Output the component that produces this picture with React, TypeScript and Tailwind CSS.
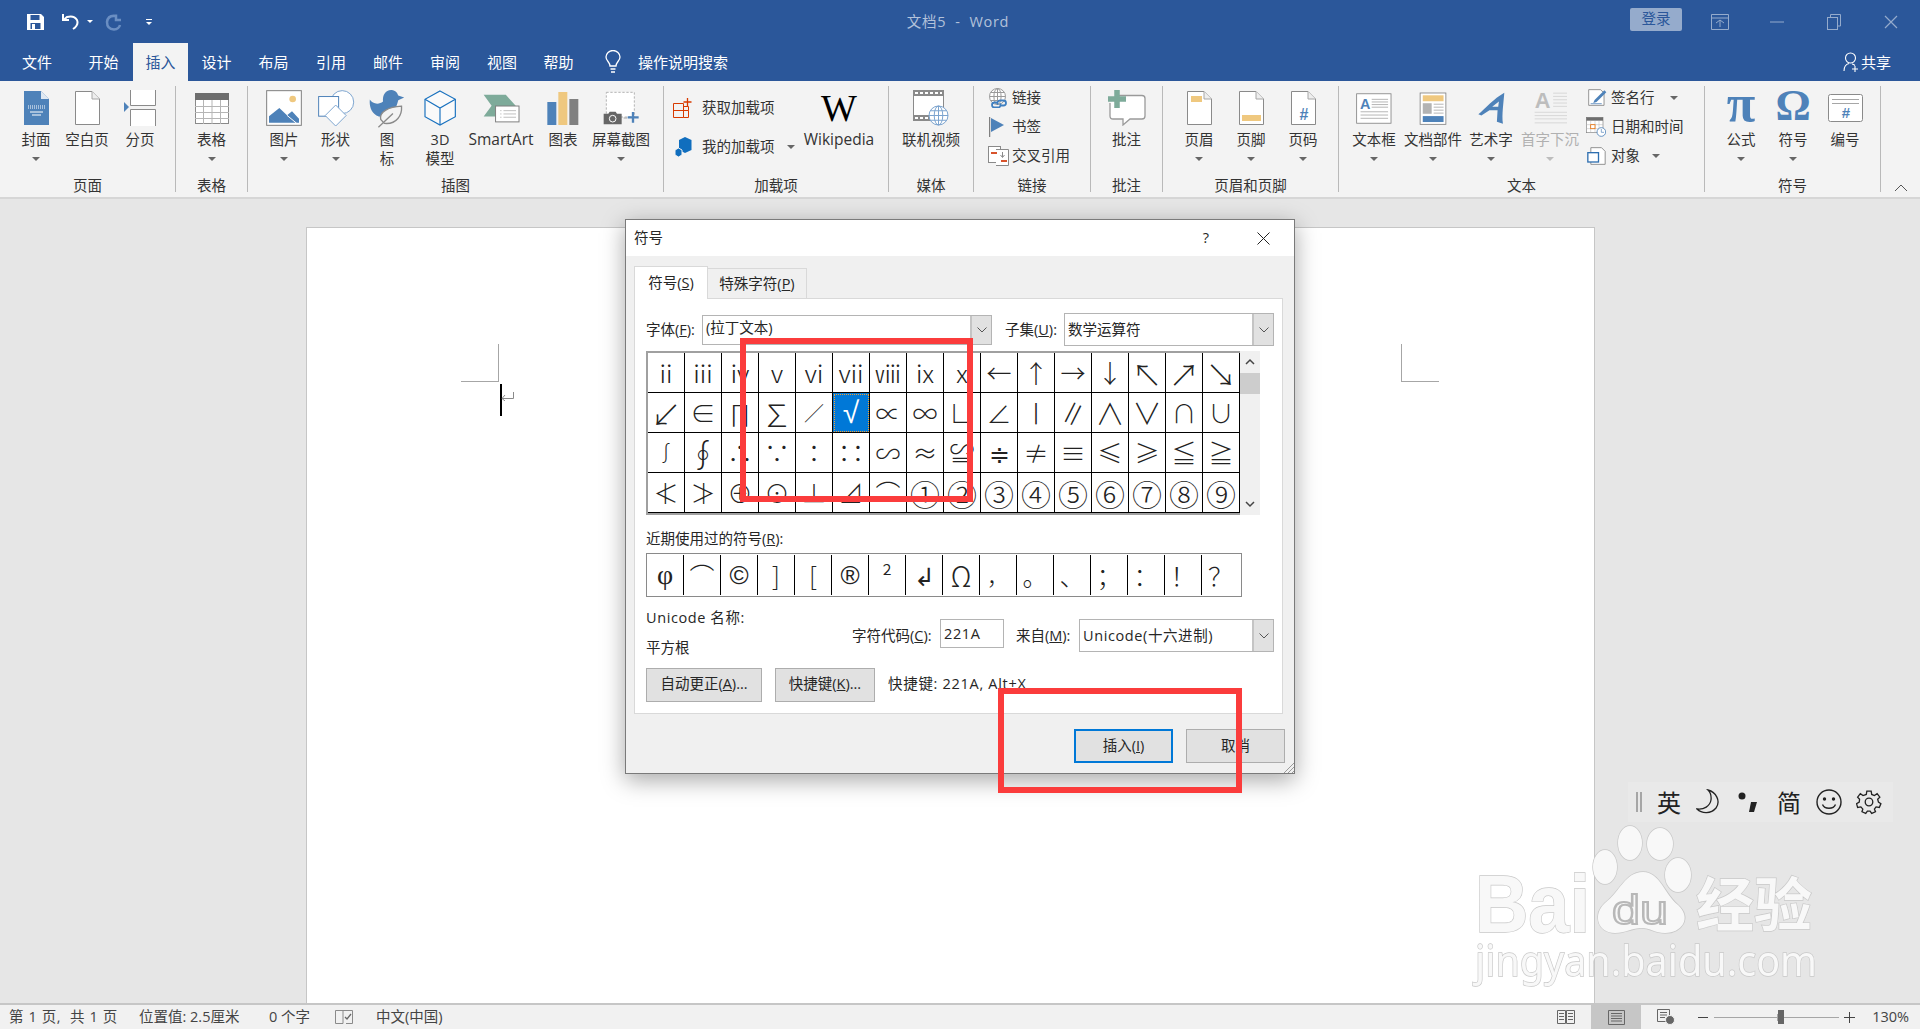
import React from "react";

const BLUE = "#4e82b9";
const PALE = "#7ca4cf";
const GREY = "#808080";
const GOLD = "#efc87f";
const GREEN = "#7eab9a";

function Page({ children, w = 25, h = 34 }: { children?: React.ReactNode; w?: number; h?: number }) {
  return (
    <svg width={w} height={h} viewBox="0 0 25 34">
      <path d="M.5.5H17L24.500 8V33.500H.5Z" fill="#fff" stroke="#8a8a8a" />
      <path d="M17 .5V8H24.500" fill="#eee" stroke="#a6a6a6" />
      {children}
    </svg>
  );
}

const CoverIcon = () => (
  <svg width="25" height="34" viewBox="0 0 25 34">
    <path d="M0 0H17L25 8V34H0Z" fill={BLUE} />
    <path d="M17 0V8H25Z" fill="#dfe8f2" />
    <path d="M4 15H21M4 17H21" stroke="#fff" strokeWidth="1" strokeDasharray="1 1" />
    <path d="M6 21H19M8 24H17" stroke="#fff" strokeWidth="1" />
  </svg>
);

const BreakIcon = () => (
  <svg width="32" height="36" viewBox="0 0 32 36">
    <path d="M6.500 0V15.500H31.500V0" fill="#fff" stroke="#8a8a8a" />
    <path d="M6.500 36V19.500H31.500V36" fill="#fff" stroke="#8a8a8a" />
    <path d="M0 12L5 17L0 22Z" fill={BLUE} />
  </svg>
);

const TableIcon = () => (
  <svg width="34" height="31" viewBox="0 0 34 31">
    <rect x=".5" y=".5" width="33" height="30" fill="#fff" stroke="#8a8a8a" />
    <rect width="34" height="7" fill="#6d6d6d" />
    <path d="M0 13.500H34M0 19.500H34M0 25.500H34M8.500 7V31M17 7V31M25.500 7V31" stroke="#b5b5b5" />
  </svg>
);

const PictureIcon = () => (
  <svg width="36" height="36" viewBox="78 18 108 108">
    <rect x="80" y="20" width="104" height="104" fill="#fff" stroke={GREY} strokeWidth="3" />
    <circle cx="158" cy="45" r="10" fill={GOLD} />
    <path d="M87 116V97L118 72L141 94L156 82L177 104V116Z" fill={BLUE} />
    <path d="M141 94L170 118" stroke="#fff" strokeWidth="3" />
  </svg>
);

const ShapesIcon = () => (
  <svg width="38" height="38" viewBox="228 12 116 116">
    <circle cx="305" cy="52" r="35" fill="#fff" stroke={PALE} strokeWidth="3" />
    <rect x="233" y="35" width="61" height="60" fill="#fff" stroke={BLUE} strokeWidth="3" />
    <path d="M285 61L317 93L285 125L253 93Z" fill="#fff" stroke={PALE} strokeWidth="3" />
  </svg>
);

const DuckIcon = () => (
  <svg width="36" height="39" viewBox="390 12 108 118">
    <path d="M392 44C400 58 420 60 432 50C430 30 440 14 458 15C470 16 476 24 478 32L496 38L478 46C474 60 472 70 462 78C450 90 430 102 412 92C396 82 390 64 392 44Z" fill={BLUE} />
    <path d="M425 104C420 80 450 66 488 64C490 90 474 120 436 116Z" fill="#f3f3f3" stroke="#8a8a8a" strokeWidth="4" />
    <path d="M418 128L462 86" stroke="#8a8a8a" strokeWidth="4" fill="none" />
  </svg>
);

const CubeIcon = () => (
  <svg width="32" height="36" viewBox="550 20 96 106">
    <path d="M598 22L644 47V99L598 124L553 99V47Z" fill="#fafafa" stroke="#1a72bf" strokeWidth="3.500" />
    <path d="M553 47L598 73L644 47M598 73V124" fill="none" stroke="#1a72bf" strokeWidth="3.500" />
  </svg>
);

const SmartArtIcon = () => (
  <svg width="37" height="29" viewBox="726 28 112 87">
    <path d="M728 30H795L825 63L795 96H728L752 63Z" fill={GREEN} />
    <rect x="764" y="64" width="71" height="48" fill="#fff" stroke={GREY} strokeWidth="3" />
    <path d="M778 78H782M788 78H826M778 88H782M788 88H826M778 98H782M788 98H826" stroke="#a0a0a0" strokeWidth="2" />
  </svg>
);

const ChartIcon = () => (
  <svg width="32" height="33" viewBox="921 24 94 99">
    <rect x="921" y="54" width="27" height="69" fill={BLUE} />
    <rect x="954" y="24" width="27" height="99" fill={GOLD} />
    <rect x="987" y="45" width="27" height="78" fill={GREY} />
  </svg>
);

const ShotIcon = () => (
  <svg width="36" height="34" viewBox="1090 22 108 102">
    <rect x="1100" y="26" width="84" height="74" fill="#fff" stroke="#a6a6a6" strokeWidth="2.500" strokeDasharray="7 5" />
    <path d="M1092 90H1106L1110 84H1128L1132 90H1146V122H1092Z" fill="#666" />
    <circle cx="1119" cy="105" r="10" fill="#666" stroke="#fff" strokeWidth="3" />
    <path d="M1152 103H1162" stroke="#a6a6a6" strokeWidth="3" />
    <path d="M1180 85V117M1164 101H1197" stroke={BLUE} strokeWidth="7" />
  </svg>
);

const GetAddin = () => (
  <svg width="20" height="20" viewBox="0 0 20 20">
    <path d="M.5 5.500H10.500V19.500H.5ZM.5 12.500H15.500V19.500H10.500M10.500 8.500H15.500V12.500" fill="none" stroke="#d83b01" />
    <path d="M14.500 0V8M10.500 4H18.500" stroke="#d83b01" strokeWidth="1.300" />
  </svg>
);

const MyAddin = () => (
  <svg width="17" height="20" viewBox="0 0 17 20">
    <path d="M10 0L16.500 3V13L10 16L4 13V3Z" fill="#106ebe" />
    <path d="M3.500 11L7 13V18L3.500 20L0 18V13Z" fill="#106ebe" stroke="#f3f3f3" />
  </svg>
);

const Globe = ({ x, y, r, c }: { x: number; y: number; r: number; c: string }) => (
  <g fill="none" stroke={c} strokeWidth="1">
    <circle cx={x} cy={y} r={r} fill="#fff" />
    <ellipse cx={x} cy={y} rx={r * 0.45} ry={r} />
    <path d={`M${x - r} ${y}H${x + r}M${x - r * 0.86} ${y - r * 0.5}H${x + r * 0.86}M${x - r * 0.86} ${y + r * 0.5}H${x + r * 0.86}M${x} ${y - r}V${y + r}`} />
  </g>
);

const VideoIcon = () => (
  <svg width="36" height="36" viewBox="0 0 36 36">
    <rect x=".5" y=".5" width="30" height="30" fill="#fff" stroke="#8a8a8a" />
    <path d="M0 0H31V6H0ZM0 25H31V31H0Z" fill="#8a8a8a" />
    <path d="M2 2H5V4H2ZM7 2H10V4H7ZM12 2H15V4H12ZM17 2H20V4H17ZM22 2H25V4H22ZM27 2H29V4H27ZM2 27H5V29H2ZM7 27H10V29H7ZM12 27H15V29H12Z" fill="#fff" />
    <Globe x={25.500} y={25.500} r={9.500} c={PALE} />
  </svg>
);

const LinkIcon = () => (
  <svg width="20" height="20" viewBox="0 0 20 20">
    <Globe x={8.500} y={8.500} r={8} c="#9a9a9a" />
    <path d="M8 14.500H5.500A2.500 2.500 0 0 0 5.500 19.500H9A2.500 2.500 0 0 0 11 15.500M12 17.500H14.500A2.500 2.500 0 0 0 14.500 12.500H11A2.500 2.500 0 0 0 9 16.500" fill="none" stroke="#3f7fc0" strokeWidth="1.800" />
  </svg>
);

const BookmarkIcon = () => (
  <svg width="16" height="20" viewBox="0 0 16 20">
    <path d="M.5 0V20" stroke={GREY} strokeWidth="1.500" />
    <path d="M2 1L15 8L2 15Z" fill={BLUE} />
  </svg>
);

const CrossRefIcon = () => (
  <svg width="21" height="20" viewBox="0 0 21 20">
    <rect x=".5" y=".5" width="12" height="16" fill="#fff" stroke="#8a8a8a" />
    <path d="M8 3.500H20.500V19.500H8" fill="#fff" stroke="#8a8a8a" />
    <rect x="3" y="6" width="6" height="2" fill="#d8532c" />
    <rect x="13" y="14" width="6" height="2" fill="#d8532c" />
    <path d="M14.500 6V11M12.500 9L14.500 11.500L16.500 9" fill="none" stroke="#8a8a8a" />
  </svg>
);

const CommentIcon = () => (
  <svg width="38" height="36" viewBox="0 0 38 36">
    <path d="M10 5.500H34Q37 5.500 37 8.500V26Q37 29 34 29H22L15 35V29H5Q2 29 2 26V13" fill="#fff" stroke="#9a9a9a" strokeWidth="1.300" />
    <path d="M12 0V18M3 9H21" stroke={GREEN} strokeWidth="5.500" transform="translate(-3 0)" />
  </svg>
);

const HashText = ({ x, y, s }: { x: number; y: number; s: number }) => (
  <text x={x} y={y} fontSize={s} fill={BLUE} textAnchor="middle" fontFamily="Liberation Sans" fontWeight="700">#</text>
);

const TextBoxIcon = () => (
  <svg width="36" height="31" viewBox="50 23 110 94">
    <rect x="52" y="25" width="105" height="90" fill="#fff" stroke={GREY} strokeWidth="2.500" />
    <text x="78" y="72" fontSize="44" fill={BLUE} textAnchor="middle" fontFamily="Liberation Sans" fontWeight="700">A</text>
    <path d="M98 42H148M98 50H148M98 58H148M98 66H148M64 80H148M64 90H148M64 100H148" stroke="#a6a6a6" strokeWidth="2.500" />
  </svg>
);

const DocPartIcon = () => (
  <svg width="28" height="33" viewBox="238 20 84 100">
    <rect x="241" y="23" width="78" height="95" fill="#fff" stroke={GREY} strokeWidth="2.500" />
    <rect x="249" y="30" width="63" height="18" fill={GOLD} />
    <rect x="249" y="54" width="27" height="32" fill="#b3b3b3" />
    <path d="M282 57H312M282 66H312M282 75H312M282 84H312" stroke="#a6a6a6" strokeWidth="2.500" />
    <rect x="249" y="93" width="63" height="18" fill={BLUE} />
  </svg>
);

const ArtIcon = () => (
  <svg width="27" height="32" viewBox="410 24 80 95">
    <path d="M411 90C432 72 456 44 488 26C486 56 480 92 484 118L466 112L468 78L444 78L420 94Z" fill={BLUE} />
    <path d="M472 52L452 68H470Z" fill="#f3f3f3" />
  </svg>
);

const DropIcon = () => (
  <svg width="33" height="34" viewBox="578 20 100 102">
    <text x="604" y="72" fontSize="66" fill="#bdbdbd" textAnchor="middle" fontFamily="Liberation Sans" fontWeight="700">A</text>
    <path d="M636 26H678M636 36H678M636 46H678M636 56H678M636 66H678M580 84H678M580 94H678M580 104H678M580 116H678" stroke="#d2d2d2" strokeWidth="2.500" />
  </svg>
);

const SignIcon = () => (
  <svg width="19" height="17" viewBox="745 18 56 52">
    <path d="M746 20H782L793 30V68H746Z" fill="#fff" stroke={GREY} strokeWidth="2.500" />
    <path d="M764 52L794 22L800 28L770 58L760 61Z" fill={BLUE} />
    <path d="M752 63H786" stroke={BLUE} strokeWidth="2.500" />
  </svg>
);

const DateIcon = () => (
  <svg width="20" height="20" viewBox="741 99 60 60">
    <rect x="742" y="100" width="50" height="46" fill="#fff" stroke={GREY} strokeWidth="2" />
    <rect x="742" y="100" width="50" height="10" fill="#6d6d6d" />
    <path d="M742 122H792M742 134H792M755 110V146M768 110V146M780 110V146" stroke="#b5b5b5" strokeWidth="1.500" />
    <rect x="755" y="122" width="13" height="12" fill="#fff" stroke="#e8710a" strokeWidth="2.500" />
    <circle cx="787" cy="144" r="13" fill="#fff" stroke={BLUE} strokeWidth="2.500" />
    <path d="M787 135V145H795" fill="none" stroke={BLUE} strokeWidth="2" />
  </svg>
);

const ObjectIcon = () => (
  <svg width="19" height="18" viewBox="741 189 56 54">
    <path d="M752 191H784L795 202V241H752Z" fill="#fff" stroke={GREY} strokeWidth="2.500" />
    <rect x="743" y="206" width="32" height="28" fill="#fff" stroke="#2f6fb0" strokeWidth="4" />
  </svg>
);

const NumberIcon = () => (
  <svg width="35" height="28" viewBox="0 0 35 28">
    <rect x=".5" y=".5" width="34" height="27" rx="2" fill="#fff" stroke="#8a8a8a" />
    <path d="M4 5.500H31M4 9.500H31" stroke="#a6a6a6" />
    <HashText x={18} y={24} s={15} />
  </svg>
);

function Caret({ light }: { light?: boolean }) {
  return <span className={`block w-0 h-0 border-x-[4px] border-x-transparent border-t-[4px] ${light ? "border-t-[#bdbdbd]" : "border-t-[#666]"}`} />;
}

function Item({
  className,
  icon,
  label,
  second,
  caret,
  dim,
  labelClass = "",
}: {
  className: string;
  icon: React.ReactNode;
  label: string;
  second?: string;
  caret?: boolean;
  dim?: boolean;
  labelClass?: string;
}) {
  return (
    <div className={`flex flex-col items-center shrink-0 ${className}`}>
      <div className="h-[44px] w-full flex items-center justify-center">{icon}</div>
      <div className={`h-[19px] leading-[19px] whitespace-nowrap ${dim ? "text-[#b0b0b0]" : ""} ${labelClass}`}>{label}</div>
      <div className="h-[19px] leading-[19px] flex items-center">
        {second}
        {caret && <Caret light={dim} />}
      </div>
    </div>
  );
}

function Group({ title, className, children }: { title: string; className: string; children: React.ReactNode }) {
  return (
    <div className={`shrink-0 flex flex-col h-[106px] border-r border-r-[#b9b9b9] ${className}`}>
      <div className="h-[89px] shrink-0 flex">{children}</div>
      <div className="h-[21px] shrink-0 leading-[21px] text-center">{title}</div>
    </div>
  );
}

function SmallRow({ icon, label, iconBox, caret }: { icon: React.ReactNode; label: string; iconBox: string; caret?: string }) {
  return (
    <div className="h-[29px] flex items-center whitespace-nowrap">
      <div className={`flex justify-center shrink-0 ${iconBox}`}>{icon}</div>
      <span>{label}</span>
      {caret && <span className={caret}><Caret /></span>}
    </div>
  );
}

function Ribbon() {
  return (
    <div className="h-[116px] bg-[#f3f3f3] flex pt-[5px] text-[14.500px] text-[#333]">
      <Group title="页面" className="w-[176px]">
        <div className="w-[11px]" />
        <Item className="w-[50px]" icon={<CoverIcon />} label="封面" caret />
        <Item className="w-[52px]" icon={<Page />} label="空白页" />
        <Item className="w-[54px]" icon={<BreakIcon />} label="分页" />
      </Group>
      <Group title="表格" className="w-[72px]">
        <Item className="w-[71px]" icon={<TableIcon />} label="表格" caret />
      </Group>
      <Group title="插图" className="w-[416px]">
        <div className="w-[12px]" />
        <Item className="w-[48px]" icon={<PictureIcon />} label="图片" caret />
        <Item className="w-[55px]" icon={<ShapesIcon />} label="形状" caret />
        <Item className="w-[48px]" icon={<DuckIcon />} label="图" second="标" />
        <Item className="w-[58px]" icon={<CubeIcon />} label="3D" second="模型" />
        <Item className="w-[64px]" icon={<SmartArtIcon />} label="SmartArt" labelClass="text-[15.500px]" />
        <Item className="w-[60px]" icon={<ChartIcon />} label="图表" />
        <Item className="w-[56px]" icon={<ShotIcon />} label="屏幕截图" caret />
      </Group>
      <Group title="加载项" className="w-[225px]">
        <div className="w-[139px] pt-[7px] flex flex-col gap-[10px]">
          <SmallRow icon={<GetAddin />} label="获取加载项" iconBox="w-[38px]" />
          <SmallRow icon={<MyAddin />} label="我的加载项" iconBox="w-[38px]" caret="ml-[12px]" />
        </div>
        <div className="w-[72px] flex flex-col items-center">
          <div className="h-[44px] flex items-center font-['Liberation_Serif',serif] text-[38px] leading-none text-black">W</div>
          <div className="h-[19px] leading-[19px] whitespace-nowrap text-[15.500px]">Wikipedia</div>
        </div>
      </Group>
      <Group title="媒体" className="w-[85px]">
        <Item className="w-[84px]" icon={<VideoIcon />} label="联机视频" />
      </Group>
      <Group title="链接" className="w-[117px]">
        <div className="flex flex-col mt-[-3px]">
          <SmallRow icon={<LinkIcon />} label="链接" iconBox="w-[38px] pl-[11px]" />
          <SmallRow icon={<BookmarkIcon />} label="书签" iconBox="w-[38px] pl-[8px]" />
          <SmallRow icon={<CrossRefIcon />} label="交叉引用" iconBox="w-[38px] pl-[11px]" />
        </div>
      </Group>
      <Group title="批注" className="w-[72px]">
        <Item className="w-[71px]" icon={<CommentIcon />} label="批注" />
      </Group>
      <Group title="页眉和页脚" className="w-[176px]">
        <div className="w-[10px]" />
        <Item className="w-[52px]" label="页眉" caret icon={<Page><rect x="4" y="5" width="11" height="6" fill={GOLD} /></Page>} />
        <Item className="w-[52px]" label="页脚" caret icon={<Page><rect x="3" y="24" width="19" height="6" fill={GOLD} /></Page>} />
        <Item className="w-[52px]" label="页码" caret icon={<Page><HashText x={13} y={29} s={16} /></Page>} />
      </Group>
      <Group title="文本" className="w-[366px]">
        <div className="w-[6px]" />
        <Item className="w-[58px]" icon={<TextBoxIcon />} label="文本框" caret />
        <Item className="w-[60px]" icon={<DocPartIcon />} label="文档部件" caret />
        <Item className="w-[56px]" icon={<ArtIcon />} label="艺术字" caret />
        <Item className="w-[62px]" icon={<DropIcon />} label="首字下沉" caret dim />
        <div className="flex flex-col mt-[-3px]">
          <SmallRow icon={<SignIcon />} label="签名行" iconBox="w-[30px] pl-[2px]" caret="ml-[15px]" />
          <SmallRow icon={<DateIcon />} label="日期和时间" iconBox="w-[30px]" />
          <SmallRow icon={<ObjectIcon />} label="对象" iconBox="w-[30px]" caret="ml-[12px]" />
        </div>
      </Group>
      <Group title="符号" className="w-[176px]">
        <div className="w-[10px]" />
        <Item
          className="w-[52px]"
          label="公式"
          caret
          icon={<span className="font-['Liberation_Serif',serif] font-bold text-[52px] leading-none text-[#4e82b9] mt-[-8px]">π</span>}
        />
        <Item
          className="w-[52px]"
          label="符号"
          caret
          icon={<span className="font-['Liberation_Serif',serif] font-bold text-[44px] leading-none text-[#4e82b9] mt-[-4px]">Ω</span>}
        />
        <Item className="w-[52px]" label="编号" icon={<NumberIcon />} />
      </Group>
      <div className="flex-1 flex items-end justify-center pb-[5px]">
        <svg width="14" height="8" viewBox="0 0 14 8" fill="none" stroke="#555"><path d="M1 7L7 1L13 7" /></svg>
      </div>
    </div>
  );
}

function TitleBar() {
  return (
    <div className="h-[43px] grid grid-cols-[1fr_auto_1fr] items-center text-[14.500px]">
      <div className="flex items-center">
        <svg className="ml-[27px]" width="17" height="16" viewBox="0 0 17 16">
          <path d="M0 0H14L17 3V16H0Z" fill="#fff" />
          <rect x="3.500" y="1" width="9" height="5" fill="#2b579a" />
          <rect x="3.500" y="9" width="10" height="6" fill="#2b579a" />
          <rect x="5" y="10" width="3" height="5" fill="#fff" />
        </svg>
        <svg className="ml-[17px]" width="19" height="17" viewBox="0 0 19 17" fill="none" stroke="#fff" strokeWidth="2">
          <path d="M2 1V7H8M2.500 7L6 4Q13 2 16 7Q18 12 12 16" />
        </svg>
        <span className="ml-[7px]"><span className="block w-0 h-0 border-x-[3px] border-x-transparent border-t-[3px] border-t-white" /></span>
        <svg className="ml-[12px]" width="18" height="18" viewBox="0 0 18 18" fill="none" stroke="#6a8ec2" strokeWidth="2.500">
          <path d="M11 1.500V7H16M10.500 3Q3 2 2 9Q2 16 9 16.500Q14 16 15 12" />
        </svg>
        <span className="ml-[23px] flex flex-col gap-[2px] items-center">
          <span className="block w-[6px] h-px bg-white" />
          <span className="block w-0 h-0 border-x-[3px] border-x-transparent border-t-[3px] border-t-white" />
        </span>
      </div>
      <div className="text-[#b3c2da] tracking-[0.7px] pr-[4px]">文档5&nbsp;&nbsp;-&nbsp;&nbsp;Word</div>
      <div className="flex items-center justify-end">
        <div className="w-[52px] h-[23px] mr-[9px] bg-[#95abcc] text-[#2b579a] rounded-[2px] flex items-center justify-center leading-none mb-[4px]">登录</div>
        <div className="w-[57px] h-[38px] flex items-center justify-center">
          <svg width="18" height="16" viewBox="0 0 18 16" fill="none" stroke="#95abcc"><path d="M.5.5H17.500V15.500H.5ZM.5 4H17.500M5 9L9 6L13 9M9 6V13" /></svg>
        </div>
        <div className="w-[57px] h-[38px] flex items-center justify-center">
          <svg width="14" height="2" viewBox="0 0 14 2"><path d="M0 1H14" stroke="#95abcc" /></svg>
        </div>
        <div className="w-[57px] h-[38px] flex items-center justify-center">
          <svg width="14" height="16" viewBox="0 0 14 16" fill="none" stroke="#95abcc"><path d="M3.500 3V.5H13.500V12H10.500" /><rect x=".5" y="3.500" width="10" height="12" /></svg>
        </div>
        <div className="w-[58px] h-[38px] flex items-center justify-center">
          <svg width="14" height="14" viewBox="0 0 14 14" stroke="#95abcc" strokeWidth="1.200"><path d="M1 1L13 13M13 1L1 13" /></svg>
        </div>
      </div>
    </div>
  );
}

const TABS = [
  { label: "文件", w: "w-[74px]" },
  { label: "开始", w: "w-[59px]" },
  { label: "插入", w: "w-[55px]", on: true },
  { label: "设计", w: "w-[57px]" },
  { label: "布局", w: "w-[57px]" },
  { label: "引用", w: "w-[58px]" },
  { label: "邮件", w: "w-[56px]" },
  { label: "审阅", w: "w-[58px]" },
  { label: "视图", w: "w-[56px]" },
  { label: "帮助", w: "w-[57px]" },
];

function TabRow() {
  return (
    <div className="h-[38px] flex text-[15px] text-white">
      {TABS.map((t) => (
        <div key={t.label} className={`${t.w} flex items-center justify-center ${t.on ? "bg-[#f3f3f3] text-[#2b579a]" : ""}`}>
          {t.label}
        </div>
      ))}
      <div className="w-[51px] flex items-center justify-end pr-[17px]">
        <svg width="16" height="24" viewBox="0 0 16 24" fill="none" stroke="#fff" strokeWidth="1.300">
          <path d="M5 16C5 12 1 11 1 7A7 6.500 0 0 1 15 7C15 11 11 12 11 16ZM5.500 19H10.500M6 22H10" />
        </svg>
      </div>
      <div className="flex items-center">操作说明搜索</div>
      <div className="flex-1 flex items-center justify-end pr-[29px]">
        <svg className="mr-[2px]" width="16" height="20" viewBox="0 0 16 20" fill="none" stroke="#fff" strokeWidth="1.100">
          <circle cx="7.500" cy="6" r="5" />
          <path d="M1 19C1 14 4 12 6 11.500M9 12C10 12.200 11 12.600 12 13.500M12 14V20M9 17H15" />
        </svg>
        共享
      </div>
    </div>
  );
}

// symbol table, same order as the dialog
const SYMBOLS = [
  "ⅱ", "ⅲ", "ⅳ", "ⅴ", "ⅵ", "ⅶ", "ⅷ", "ⅸ", "ⅹ", "←", "↑", "→", "↓", "↖", "↗", "↘",
  "↙", "∈", "∏", "∑", "∕", "√", "∝", "∞", "∟", "∠", "∣", "∥", "∧", "∨", "∩", "∪",
  "∫", "∮", "∴", "∵", "∶", "∷", "∽", "≈", "≌", "≑", "≠", "≡", "≤", "≥", "≦", "≧",
  "≮", "≯", "⊕", "⊙", "⊥", "⊿", "⌒", "①", "②", "③", "④", "⑤", "⑥", "⑦", "⑧", "⑨",
];
const RECENT = ["φ", "⌒", "©", "]", "[", "®", "²", "↲", "Ω", "，", "。", "、", "；", "：", "！", "？"];

// glyphs that sit larger or in another face than the default cell text
const GLYPH: Record<string, string> = {
  "↖": "text-[30px]", "↗": "text-[30px]", "↘": "text-[30px]", "↙": "text-[30px]",
  "∑": "text-[30px]", "∮": "text-[32px]", "∧": "text-[29px]", "∨": "text-[29px]",
  "∥": "text-[29px]", "∣": "text-[29px]", "∕": "text-[20px]", "∫": "text-[20px]",
  "①": "text-[30px]", "②": "text-[30px]", "③": "text-[30px]", "④": "text-[30px]", "⑤": "text-[30px]",
  "⑥": "text-[30px]", "⑦": "text-[30px]", "⑧": "text-[30px]", "⑨": "text-[30px]",
  "√": "text-[30px] font-['Liberation_Sans',sans-serif]",
  "φ": "text-[28px] font-['Liberation_Serif',serif]",
  "©": "text-[26px] font-['Liberation_Sans',sans-serif]",
  "®": "text-[26px] font-['Liberation_Sans',sans-serif]",
  "，": "text-[22px]",
  "Ω": "text-[28px]",
};

function Key({ text, k, end = "" }: { text: string; k: string; end?: string }) {
  return (
    <span>
      {text}(<u>{k}</u>){end}
    </span>
  );
}

function Combo({ text, className, textClass = "" }: { text: string; className: string; textClass?: string }) {
  return (
    <div className={`flex bg-white border border-[#b4b4b4] shrink-0 ${className}`}>
      <div className={`flex-1 pl-[3px] flex items-center whitespace-nowrap ${textClass}`}>{text}</div>
      <div className="w-[21px] bg-[#e1e1e1] border-l-2 border-[#c4c4c4] flex items-center justify-center">
        <svg width="10" height="6" viewBox="0 0 10 6" fill="none" stroke="#555"><path d="M.5.5L5 5L9.500.5" /></svg>
      </div>
    </div>
  );
}

function Dialog() {
  return (
    <div className="absolute left-[625px] top-[219px] w-[670px] h-[555px] bg-[#f0f0f0] border border-[#7a7a7a] shadow-[0_6px_22px_rgba(0,0,0,0.35)] text-[14.500px] text-[#262626]">
      <div className="h-[36px] bg-white flex items-center pl-[8px]">
        <span className="flex-1">符号</span>
        <span className="w-[20px] text-center mr-[41px]">?</span>
        <svg className="mr-[24px]" width="13" height="13" viewBox="0 0 13 13" stroke="#222"><path d="M.5.5L12.500 12.500M12.500.5L.5 12.500" /></svg>
      </div>
      <div className="ml-[8px] mt-[10px] flex items-end h-[32px] relative z-10">
        <div className="w-[74px] h-[33px] bg-white border border-b-0 border-[#d9d9d9] flex items-center justify-center mb-[-1px]">
          <Key text="符号" k="S" />
        </div>
        <div className="w-[99px] h-[30px] bg-[#f0f0f0] border border-l-0 border-b-0 border-[#d9d9d9] flex items-center justify-center">
          <Key text="特殊字符" k="P" />
        </div>
      </div>
      <div className="ml-[8px] w-[649px] h-[416px] bg-white border border-[#d9d9d9] pl-[11px] pt-[14px]">
        <div className="h-[33px] flex items-center">
          <span className="w-[56px] shrink-0 whitespace-nowrap"><Key text="字体" k="F" end=":" /></span>
          <Combo text="(拉丁文本)" className="w-[290px] h-[30px]" textClass="pb-[4px]" />
          <span className="ml-[13px] w-[59px] shrink-0 whitespace-nowrap"><Key text="子集" k="U" end=":" /></span>
          <Combo text="数学运算符" className="w-[210px] h-[33px]" />
        </div>
        <div className="mt-[5px] flex">
          <div className="grid grid-cols-[repeat(16,37px)] auto-rows-[40px] border-t-2 border-l-2 border-b-2 border-[#a0a0a0] font-['Noto_Sans_CJK_SC',sans-serif] text-[25px] font-light text-[#222] w-[594px] shrink-0">
            {SYMBOLS.map((s) => (
              <div
                key={s}
                className={`flex items-center justify-center border-r border-b border-black leading-none ${GLYPH[s] ?? ""} ${
                  s === "√" ? "bg-[#0078d7] text-white outline-1 outline-dotted outline-offset-[-2px] outline-[#f7a030]" : ""
                }`}
              >
                {s}
              </div>
            ))}
          </div>
          <div className="w-[20px] h-[164px] bg-[#f0f0f0] flex flex-col items-center">
            <svg className="mt-[7px]" width="10" height="7" viewBox="0 0 10 7" fill="none" stroke="#444" strokeWidth="1.500"><path d="M1 6L5 2L9 6" /></svg>
            <div className="w-full h-[21px] bg-[#cdcdcd] mt-[8px]" />
            <div className="flex-1" />
            <svg className="mb-[7px]" width="10" height="7" viewBox="0 0 10 7" fill="none" stroke="#444" strokeWidth="1.500"><path d="M1 1L5 5L9 1" /></svg>
          </div>
        </div>
        <div className="mt-[14px] h-[20px] leading-[20px] whitespace-nowrap"><Key text="近期使用过的符号" k="R" end=":" /></div>
        <div className="mt-[4px] w-[596px] h-[44px] grid grid-cols-[repeat(16,37px)] border border-[#8a8a8a] bg-white font-['Noto_Sans_CJK_SC',sans-serif] text-[25px] font-light text-[#222]">
          {RECENT.map((s) => (
            <div key={s} className={`flex items-center justify-center border-r border-black last:border-r-0 leading-none my-px ${GLYPH[s] ?? ""}`}>{s}</div>
          ))}
        </div>
        <div className="mt-[11px] h-[50px] flex">
          <div className="w-[206px] shrink-0 flex flex-col gap-[10px]">
            <div className="h-[20px] leading-[20px] tracking-[0.6px]">Unicode 名称:</div>
            <div className="h-[20px] leading-[20px]">平方根</div>
          </div>
          <div className="flex items-center h-[33px] mt-[11px]">
            <span className="w-[88px] shrink-0 whitespace-nowrap"><Key text="字符代码" k="C" end=":" /></span>
            <div className="w-[64px] h-[29px] shrink-0 border border-[#b4b4b4] mb-[4px] pl-[3px] flex items-center tracking-[0.6px]">221A</div>
            <span className="ml-[12px] w-[63px] shrink-0 whitespace-nowrap"><Key text="来自" k="M" end=":" /></span>
            <Combo text="Unicode(十六进制)" className="w-[195px] h-[33px]" textClass="tracking-[0.6px]" />
          </div>
        </div>
        <div className="mt-[10px] flex items-center">
          <div className="w-[116px] h-[34px] pb-[3px] bg-[#e1e1e1] border border-[#adadad] flex items-center justify-center">
            <Key text="自动更正" k="A" end="..." />
          </div>
          <div className="ml-[13px] w-[100px] h-[34px] pb-[3px] bg-[#e1e1e1] border border-[#adadad] flex items-center justify-center">
            <Key text="快捷键" k="K" end="..." />
          </div>
          <span className="ml-[13px] pb-[2px] tracking-[0.7px]">快捷键: 221A, Alt+X</span>
        </div>
      </div>
      <div className="mt-[15px] flex justify-end gap-[13px] pr-[9px]">
        <div className="w-[99px] h-[34px] bg-[#e1e1e1] border-2 border-[#0078d7] flex items-center justify-center">
          <Key text="插入" k="I" />
        </div>
        <div className="w-[99px] h-[34px] bg-[#e1e1e1] border border-[#adadad] flex items-center justify-center">取消</div>
      </div>
      <svg className="absolute right-0 bottom-0" width="11" height="11" viewBox="0 0 11 11" stroke="#9a9a9a">
        <path d="M1 11L11 1M5 11L11 5M9 11L11 9" />
      </svg>
    </div>
  );
}

function DocPage() {
  return (
    <div className="relative w-[1289px] h-full bg-white border border-b-0 border-[#c6c6c6]">
      <div className="absolute left-[154px] top-[116px] w-[38px] h-[38px] border-r border-b border-[#a6a6a6]" />
      <div className="absolute left-[1094px] top-[116px] w-[38px] h-[38px] border-l border-b border-[#a6a6a6]" />
      <div className="absolute left-[193px] top-[156px] w-[2px] h-[32px] bg-black" />
      <svg className="absolute left-[194px] top-[164px]" width="13" height="9" viewBox="0 0 13 9" fill="none" stroke="#8a8a8a">
        <path d="M12.500 0V6.500H1M4 3L1 6.500L4 9" />
      </svg>
    </div>
  );
}

function InputBar() {
  return (
    <div className="absolute left-[1628px] top-[782px] w-[265px] h-[40px] bg-[#e9e9e9] flex items-center text-[#222] text-[24px] font-['Noto_Sans_CJK_SC',sans-serif]">
      <span className="ml-[8px] w-[6px] h-[20px] border-x-2 border-[#a6a6a6]" />
      <span className="w-[52px] ml-[1px] text-center leading-none">英</span>
      <svg className="ml-[1px]" width="24" height="26" viewBox="0 0 24 26" fill="none" stroke="#222" strokeWidth="1.300">
        <path d="M12 1C20 3 25 12 20 19C15 25 6 25 1 20C8 21 14 17 15 11C15.500 7 14 3 12 1Z" />
      </svg>
      <svg className="ml-[18px]" width="20" height="22" viewBox="0 0 20 22" fill="#222">
        <circle cx="4" cy="5" r="3.500" />
        <path d="M13 11H19L16 21H11Z" />
      </svg>
      <span className="ml-[10px] w-[42px] text-center leading-none">简</span>
      <svg className="ml-[6px]" width="26" height="26" viewBox="0 0 26 26" fill="none" stroke="#222" strokeWidth="1.400">
        <circle cx="13" cy="13" r="12" />
        <circle cx="8.500" cy="10" r="1" fill="#222" />
        <circle cx="17.500" cy="10" r="1" fill="#222" />
        <path d="M6.500 15.500C8.500 20.500 17.500 20.500 19.500 15.500" />
      </svg>
      <svg className="ml-[14px]" width="26" height="26" viewBox="0 0 24 24" fill="none" stroke="#222" strokeWidth="1.200">
        <circle cx="12" cy="12" r="3.500" />
        <path d="M10 2H14L14.500 5L17 6L19.500 4.300L22 7.500L20 9.500L20.700 12L23 13.500L21.500 17L18.500 16.500L17 18.500L18 21L14.500 22.500L13 20.500H10.500L9 22.500L5.500 21L6.300 18.500L4.500 16.500L1.500 17L.5 13.500L3 12L3.300 9.500L1.500 7.500L4 4.300L6.500 6L9.500 5Z" />
      </svg>
    </div>
  );
}

function Watermark() {
  const s = { fill: "#f8f8f8", stroke: "#c8c8c8", strokeWidth: 1.4, paintOrder: "stroke" as const };
  return (
    <svg className="absolute left-[1460px] top-[800px] blur-[0.4px]" width="460" height="200" viewBox="0 0 460 200">
      <text x="15" y="132" fontFamily="Liberation Sans" fontWeight="700" fontSize="82" textLength="115" lengthAdjust="spacingAndGlyphs" {...s}>Bai</text>
      <ellipse cx="145" cy="67" rx="12" ry="17" {...s} />
      <ellipse cx="170" cy="43" rx="12" ry="17" {...s} />
      <ellipse cx="200" cy="44" rx="13" ry="16" {...s} />
      <ellipse cx="218" cy="75" rx="13" ry="17" {...s} />
      <path d="M183 72C200 72 205 95 218 105C232 118 222 133 205 133C195 133 190 128 182 128C172 128 165 133 155 133C138 133 132 115 145 103C160 92 165 72 183 72Z" {...s} />
      <text x="152" y="124" fontFamily="Liberation Sans" fontSize="40" textLength="56" lengthAdjust="spacingAndGlyphs" fill="#f8f8f8" stroke="#b8b8b8" strokeWidth="2">du</text>
      <text x="236" y="126" fontFamily="Noto Sans CJK SC" fontWeight="700" fontSize="58" {...s}>经验</text>
      <text x="15" y="176" fontFamily="Noto Sans" fontSize="42" textLength="342" lengthAdjust="spacingAndGlyphs" {...s}>jingyan.baidu.com</text>
    </svg>
  );
}

function StatusBar() {
  return (
    <div className="h-[26px] bg-[#f1f1f1] border-t-2 border-[#c6c6c6] flex items-center text-[14.500px] text-[#444]">
      <span className="ml-[9px] w-[130px] shrink-0 whitespace-nowrap tracking-[0.6px]">第 1 页,&nbsp;&nbsp;共 1 页</span>
      <span className="w-[130px] shrink-0 whitespace-nowrap">位置值: 2.5厘米</span>
      <span className="w-[66px] shrink-0 whitespace-nowrap">0 个字</span>
      <span className="w-[41px] shrink-0">
        <svg width="18" height="15" viewBox="0 0 18 15" fill="none" stroke="#8a8a8a">
          <path d="M.5.5H8V13.500H.5ZM8 .5H17.500V13.500H11" />
          <path d="M10 7L12 9L16 4" stroke="#666" strokeWidth="1.300" />
        </svg>
      </span>
      <span className="whitespace-nowrap">中文(中国)</span>
      <div className="ml-auto flex items-center h-full">
        <div className="w-[50px] h-full flex items-center justify-center">
          <svg width="18" height="15" viewBox="0 0 18 15" fill="none" stroke="#666"><path d="M.5.5H8.500V13.500H.5ZM9.500.5H17.500V13.500H9.500ZM2 3.500H7M2 6.500H7M2 9.500H7M11 3.500H16M11 6.500H16M11 9.500H16" /></svg>
        </div>
        <div className="w-[50px] h-full bg-[#c6c6c6] flex items-center justify-center">
          <svg width="17" height="15" viewBox="0 0 17 15" fill="none" stroke="#666"><path d="M.5.5H16.500V14.500H.5ZM3 3.500H14M3 6H14M3 8.500H14M3 11H14" /></svg>
        </div>
        <div className="w-[50px] h-full flex items-center justify-center">
          <svg width="18" height="16" viewBox="0 0 18 16" fill="none" stroke="#666">
            <path d="M.5.5H12.500V12.500H.5ZM3 3.500H10M3 6H10M3 8.500H8" />
            <circle cx="13" cy="11" r="4.500" fill="#666" stroke="#f1f1f1" />
          </svg>
        </div>
        <span className="ml-[7px] w-[10px] h-px bg-[#444]" />
        <div className="ml-[6px] relative w-[125px] h-px bg-[#a6a6a6]">
          <span className="absolute left-[63px] top-[-3px] w-px h-[7px] bg-[#a6a6a6]" />
          <span className="absolute left-[64px] top-[-7px] w-[6px] h-[14px] bg-[#666]" />
        </div>
        <svg className="ml-[5px]" width="11" height="11" viewBox="0 0 11 11" stroke="#444"><path d="M0 5.500H11M5.500 0V11" /></svg>
        <span className="ml-[17px] mr-[11px]">130%</span>
      </div>
    </div>
  );
}

export default function App() {
  return (
    <div className="relative w-[1920px] h-[1029px] overflow-hidden flex flex-col bg-[#e6e6e6] font-['Open_Sans','Noto_Sans_CJK_SC',sans-serif]">
      <div className="bg-[#2b579a] shrink-0">
        <TitleBar />
        <TabRow />
      </div>
      <Ribbon />
      <div className="h-[2px] bg-[#d6d6d6] shrink-0" />
      <div className="flex-1 min-h-0 flex pl-[306px] pt-[28px]">
        <DocPage />
      </div>
      <StatusBar />
      <InputBar />
      <Watermark />
      <Dialog />
      <div className="absolute left-[740px] top-[338px] w-[233px] h-[164px] border-[6px] border-[#fb3c3c]" />
      <div className="absolute left-[998px] top-[688px] w-[244px] h-[105px] border-[6px] border-[#fb3c3c]" />
    </div>
  );
}
